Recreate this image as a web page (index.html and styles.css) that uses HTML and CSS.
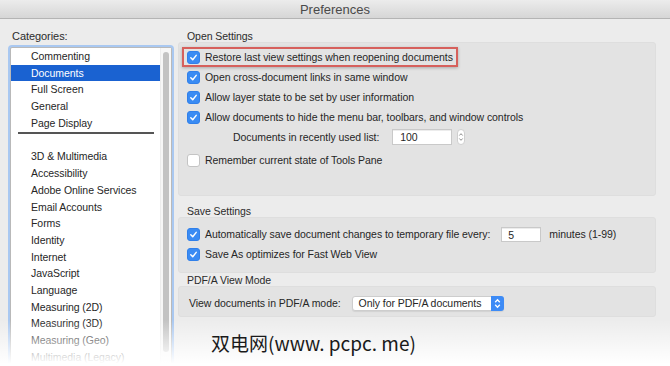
FILE: index.html
```html
<!DOCTYPE html>
<html lang="en">
<head>
    <meta charset="UTF-8">
    <meta name="viewport" content="width=device-width, initial-scale=1.0">
    <title>Preferences</title>
    <link rel="stylesheet" href="styles.css">
</head>
<body>
    <div class="window">
        <div class="titlebar">Preferences</div>
        <div class="main">
            <div class="sidebar">
                <div class="cat-label">Categories:</div>
                <div class="listbox">
                    <ul class="list">
                        <li>Commenting</li>
                        <li class="selected">Documents</li>
                        <li>Full Screen</li>
                        <li>General</li>
                        <li>Page Display</li>
                        <li class="sep"></li>
                        <li>3D &amp; Multimedia</li>
                        <li>Accessibility</li>
                        <li>Adobe Online Services</li>
                        <li>Email Accounts</li>
                        <li>Forms</li>
                        <li>Identity</li>
                        <li>Internet</li>
                        <li>JavaScript</li>
                        <li>Language</li>
                        <li>Measuring (2D)</li>
                        <li>Measuring (3D)</li>
                        <li>Measuring (Geo)</li>
                        <li>Multimedia (Legacy)</li>
                    </ul>
                    <div class="scrollbar"><div class="thumb"></div></div>
                </div>
            </div>

            <div class="panel">
                <div class="group-title">Open Settings</div>
                <div class="group-box open-box">
                    <div class="row highlight">
                        <span class="check on"><svg viewBox="0 0 13 13"><path d="M3.3 6.9l2.3 2.3 4.1-5.2"/></svg></span>
                        Restore last view settings when reopening documents
                    </div>
                    <div class="row">
                        <span class="check on"><svg viewBox="0 0 13 13"><path d="M3.3 6.9l2.3 2.3 4.1-5.2"/></svg></span>
                        Open cross-document links in same window
                    </div>
                    <div class="row">
                        <span class="check on"><svg viewBox="0 0 13 13"><path d="M3.3 6.9l2.3 2.3 4.1-5.2"/></svg></span>
                        Allow layer state to be set by user information
                    </div>
                    <div class="row">
                        <span class="check on"><svg viewBox="0 0 13 13"><path d="M3.3 6.9l2.3 2.3 4.1-5.2"/></svg></span>
                        Allow documents to hide the menu bar, toolbars, and window controls
                    </div>
                    <div class="row indent">
                        <span class="field-label">Documents in recently used list:</span>
                        <span class="text-input wide">100</span>
                        <span class="stepper"><svg viewBox="0 0 8 16"><path d="M1.8 6l2.2-2.4 2.2 2.4M1.8 10l2.2 2.4 2.2-2.4"/></svg></span>
                    </div>
                    <div class="row gap-top">
                        <span class="check"></span>
                        Remember current state of Tools Pane
                    </div>
                </div>

                <div class="group-title spaced">Save Settings</div>
                <div class="group-box save-box">
                    <div class="row">
                        <span class="check on"><svg viewBox="0 0 13 13"><path d="M3.3 6.9l2.3 2.3 4.1-5.2"/></svg></span>
                        Automatically save document changes to temporary file every:
                        <span class="text-input small">5</span>
                        <span class="unit">minutes (1-99)</span>
                    </div>
                    <div class="row">
                        <span class="check on"><svg viewBox="0 0 13 13"><path d="M3.3 6.9l2.3 2.3 4.1-5.2"/></svg></span>
                        Save As optimizes for Fast Web View
                    </div>
                </div>

                <div class="group-title tight">PDF/A View Mode</div>
                <div class="group-box pdfa-box">
                    <div class="row">
                        <span class="plain-label">View documents in PDF/A mode:</span>
                        <span class="popup">
                            <span class="popup-text">Only for PDF/A documents</span>
                            <span class="popup-arrows"><svg viewBox="0 0 13 15"><path d="M4.2 6.2l2.3-2.4 2.3 2.4M4.2 8.8l2.3 2.4 2.3-2.4"/></svg></span>
                        </span>
                    </div>
                </div>
            </div>
        </div>

        <div class="fade"></div>
        <div class="watermark">双电网(www. pcpc. me)</div>
    </div>
</body>
</html>
```

FILE: styles.css
```css
body {
    margin: 0;
    font-family: 'Liberation Sans', Arial, sans-serif;
    font-size: 10.5px;
    letter-spacing: -0.06px;
    color: #262626;
    background-color: #ececec;
}
.window {
    position: relative;
    width: 670px;
    height: 366px;
    overflow: hidden;
    background-color: #ececec;
}
.titlebar {
    height: 18px;
    line-height: 19px;
    text-align: center;
    font-size: 13px;
    letter-spacing: 0;
    color: #4a4a4a;
    background: linear-gradient(#ececec, #d6d6d6);
    border-bottom: 1px solid #b4b4b4;
}
.main {
    display: flex;
}
.sidebar {
    width: 168px;
    padding: 11px 0 0 10px;
}
.cat-label {
    line-height: 13px;
    margin-left: 2px;
    margin-bottom: 4px;
    font-size: 11px;
    color: #2b2b2b;
}
.listbox {
    position: relative;
    width: 160px;
    height: 330px;
    background-color: #fff;
    border: 1px solid #b9b9b9;
    box-shadow: 0 0 0 2px #a9c8f1;
    border-radius: 2px;
}
.list {
    list-style: none;
    margin: 0;
    padding: 0;
    width: 149px;
}
.list li {
    height: 16.7px;
    line-height: 16.7px;
    padding-left: 20px;
    white-space: nowrap;
}
.list li.selected {
    background-color: #1a62d1;
    color: #fff;
}
.list li.sep {
    height: 2px;
    margin: 1px 6px 14px 7px;
    padding: 0;
    background-color: #555;
}
.scrollbar {
    position: absolute;
    top: 0;
    right: 0;
    width: 10px;
    height: 100%;
    background-color: #f7f7f7;
    border-left: 1px solid #ededed;
}
.thumb {
    margin: 4px 0 0 2px;
    width: 6px;
    height: 300px;
    border-radius: 3px;
    background-color: #c3c3c3;
}
.panel {
    width: 478px;
    padding-top: 11px;
}
.group-title {
    line-height: 12px;
    padding-left: 9px;
    color: #2b2b2b;
}
.group-title.spaced {
    margin-top: 9px;
}
.group-title.tight {
    margin-top: 1px;
}
.group-box {
    background-color: #e3e3e3;
    border: 1px solid #dedede;
    border-radius: 3px;
    padding-left: 8px;
}
.open-box {
    padding-top: 4px;
    padding-bottom: 25px;
}
.save-box {
    padding-top: 6px;
    padding-bottom: 8px;
}
.pdfa-box {
    padding-top: 6px;
    padding-bottom: 3px;
}
.row {
    display: flex;
    align-items: center;
    height: 20px;
    white-space: nowrap;
}
.row.gap-top {
    margin-top: 3px;
}
.row.indent {
    padding-left: 46px;
}
.row.highlight {
    box-sizing: border-box;
    width: fit-content;
    margin-left: -5px;
    padding: 0 3px 0 3px;
    border: 2px solid #d6605c;
    box-shadow: 0 1px 3px rgba(0, 0, 0, 0.25);
}
.check {
    box-sizing: border-box;
    width: 13px;
    height: 13px;
    margin-right: 5px;
    border-radius: 3px;
    background-color: #fff;
    border: 1px solid #c4c4c4;
    flex-shrink: 0;
}
.check.on {
    background-color: #3a8bf3;
    border-color: #3180ea;
}
.check svg {
    display: block;
    width: 11px;
    height: 11px;
}
.check svg path {
    fill: none;
    stroke: #fff;
    stroke-width: 1.7;
    stroke-linecap: round;
    stroke-linejoin: round;
}
.field-label {
    margin-right: 13px;
}
.text-input {
    box-sizing: border-box;
    height: 16px;
    line-height: 15px;
    padding-left: 7px;
    background-color: #fff;
    border: 1px solid #c9c9c9;
    box-shadow: inset 0 1px 0 #ececec;
}
.text-input.wide {
    width: 60px;
}
.text-input.small {
    width: 40px;
    height: 15px;
    margin-left: 11px;
    padding-left: 6px;
}
.stepper {
    margin-left: 5px;
    width: 8px;
    height: 16px;
    background-color: #fff;
    border: 1px solid #cfcfcf;
    border-radius: 4px;
    box-sizing: border-box;
}
.stepper svg {
    display: block;
    width: 6px;
    height: 14px;
}
.stepper svg path, .popup-arrows svg path {
    fill: none;
    stroke: #666;
    stroke-width: 1;
}
.unit {
    margin-left: 8px;
}
.plain-label {
    margin-left: 2px;
    margin-right: 11px;
}
.popup {
    display: flex;
    align-items: center;
    box-sizing: border-box;
    width: 152px;
    height: 15px;
    background-color: #fff;
    border: 1px solid #cdcdcd;
    border-radius: 3px;
    box-shadow: 0 1px 1px rgba(0, 0, 0, 0.08);
}
.popup-text {
    flex: 1;
    padding-left: 6px;
}
.popup-arrows {
    width: 13px;
    height: 15px;
    margin: -1px -1px -1px 0;
    border-radius: 0 3px 3px 0;
    background-color: #3d8bf6;
}
.popup-arrows svg {
    display: block;
    width: 13px;
    height: 15px;
}
.popup-arrows svg path {
    stroke: #fff;
    stroke-width: 1.3;
}
.fade {
    position: absolute;
    left: 0;
    right: 0;
    bottom: 0;
    height: 46px;
    background: linear-gradient(rgba(255, 255, 255, 0), #fff 95%);
}
.watermark {
    position: absolute;
    left: 211px;
    top: 330px;
    font-family: 'Noto Sans CJK SC', sans-serif;
    font-size: 19px;
    line-height: 26px;
    letter-spacing: 0;
    color: #1a1a1a;
}
```
